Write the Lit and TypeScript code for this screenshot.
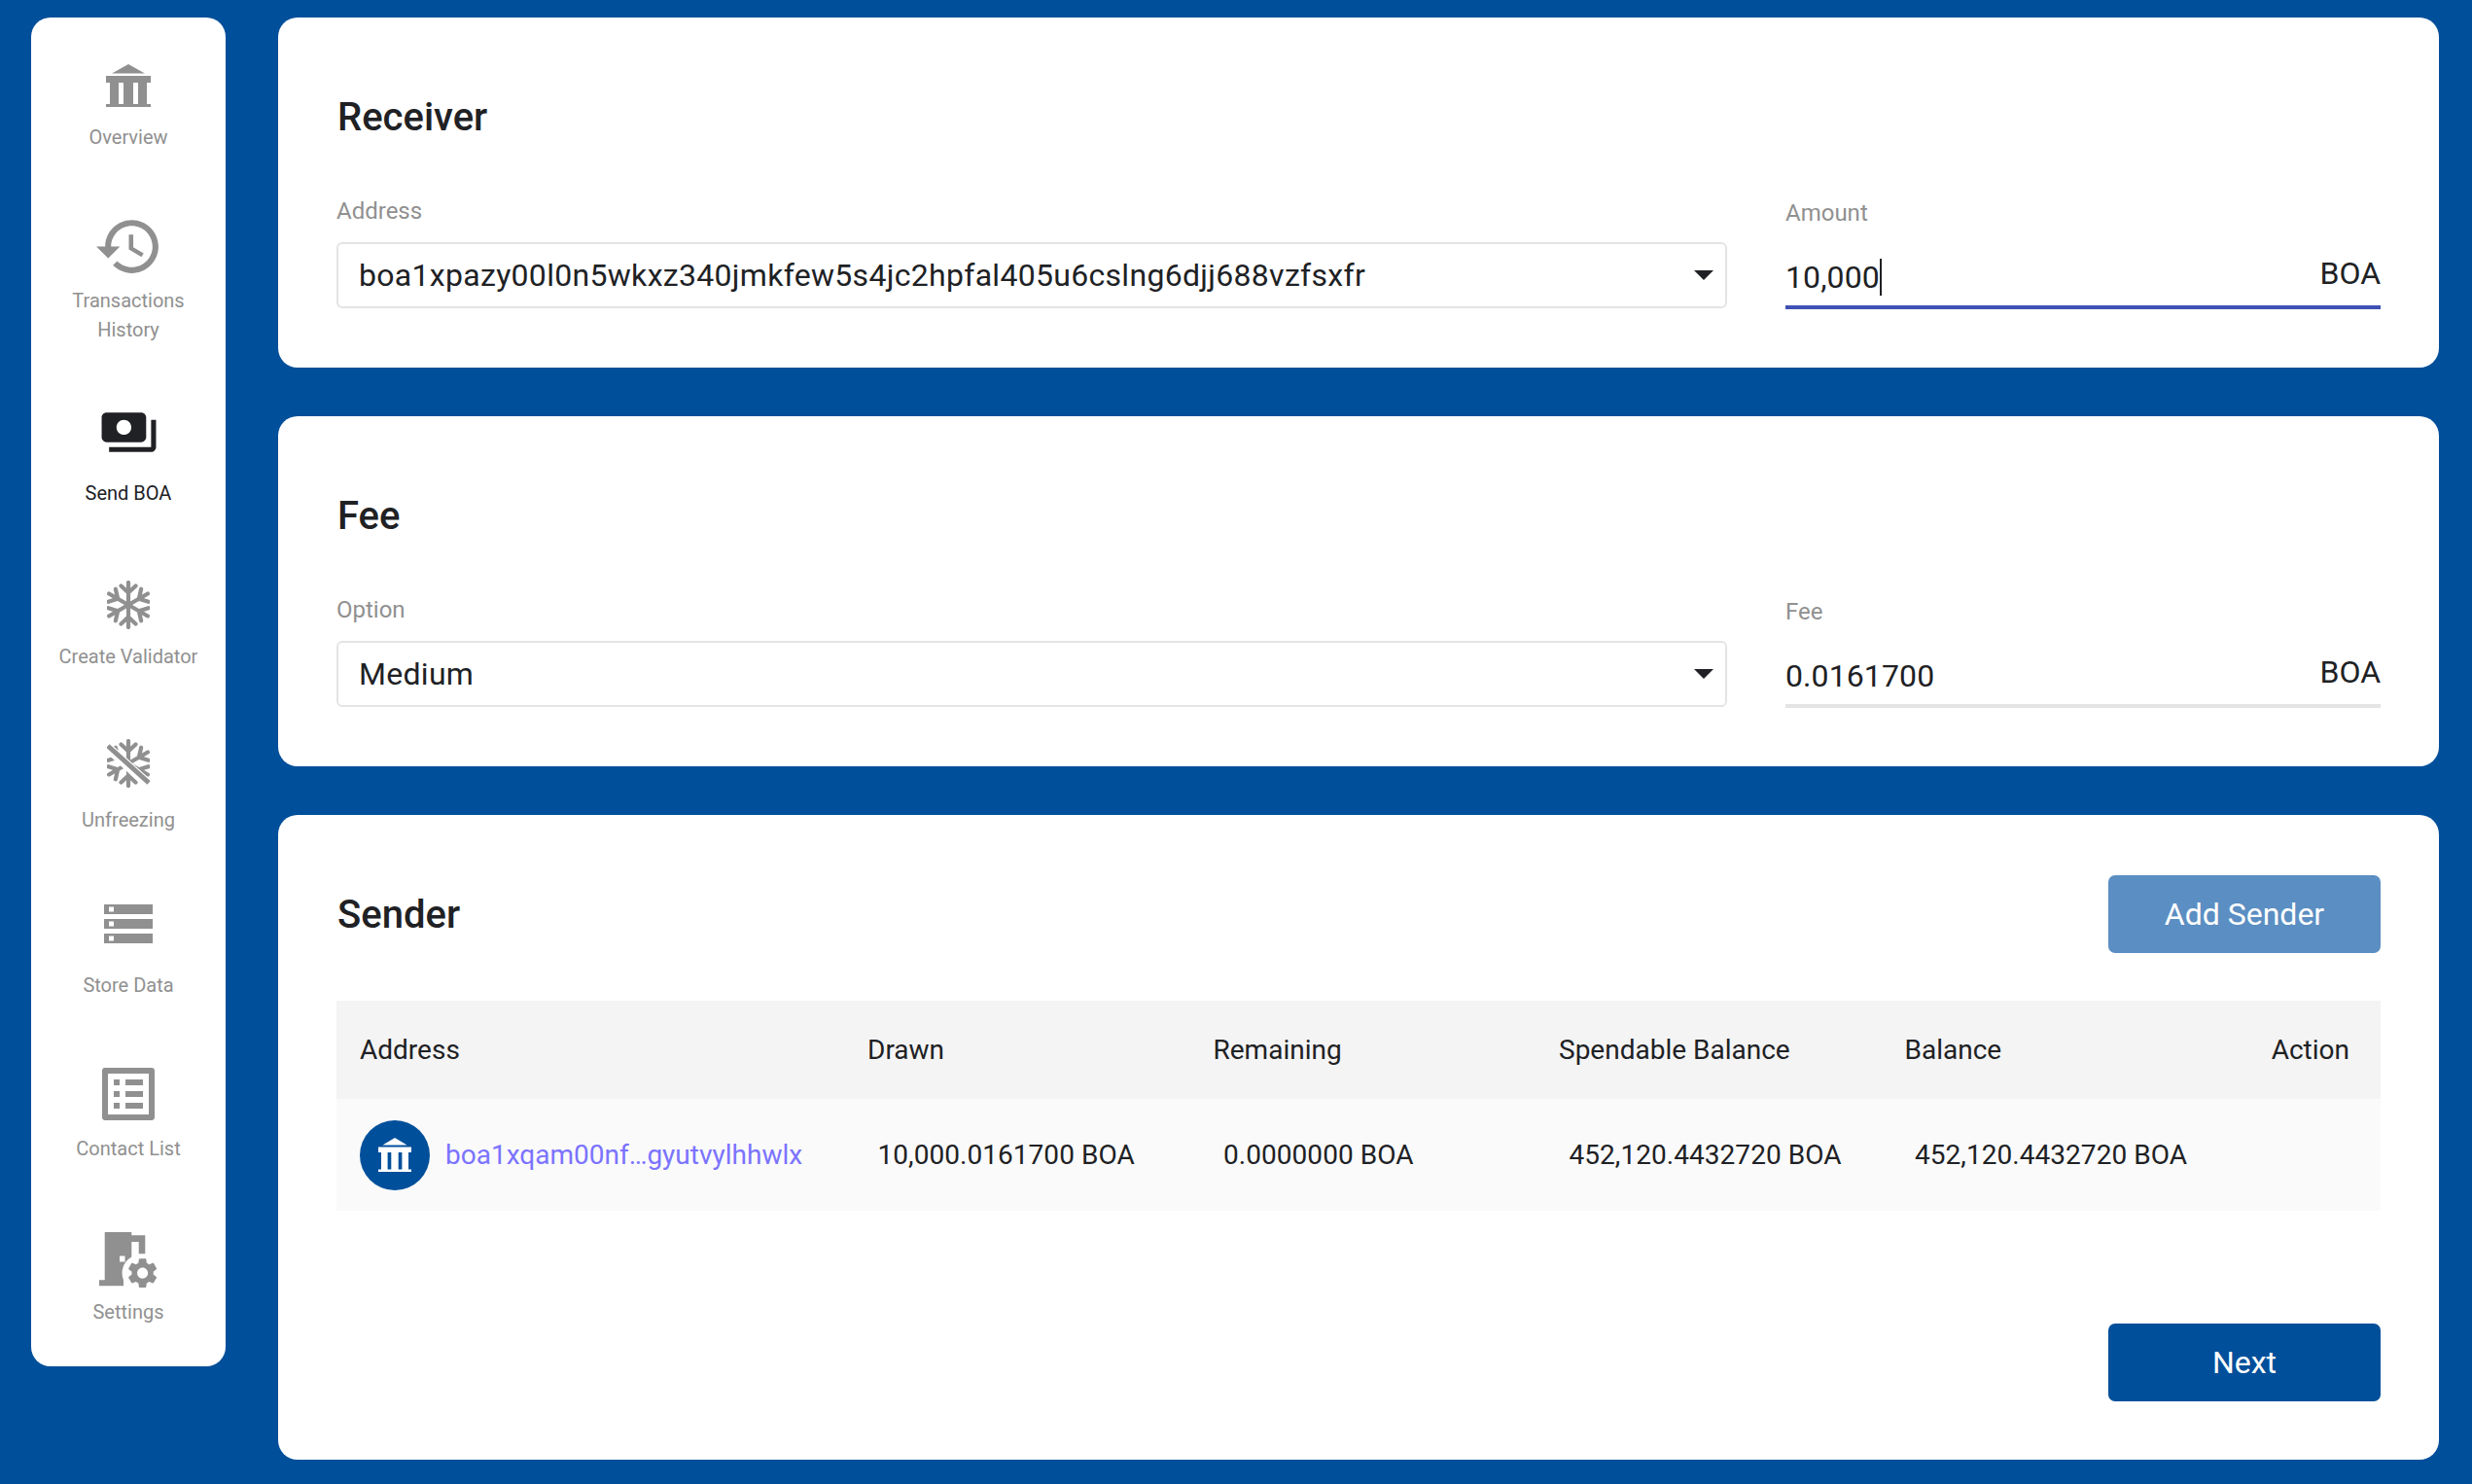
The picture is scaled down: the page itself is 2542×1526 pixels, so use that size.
import { LitElement, html, css, svg } from 'lit';
import { customElement } from 'lit/decorators.js';

const bank = svg`<path fill-rule="evenodd" d="M23 0 40 9.500H6zM0 12h46v7h-4v22h4v3H0v-3h4V19H0zM13 19v22h5V19zM28 19v22h5V19z"/>`;

// six armed snowflake, one arm rotated round the centre
const flake = svg`<g transform="translate(22 25)" fill="none" stroke="#909090" stroke-width="4.200" stroke-linecap="round">
  ${[0, 60, 120, 180, 240, 300].map(a => svg`<path transform="rotate(${a})" d="M0 0V-23M0-12.500-7.500-19.500M0-12.500 7.500-19.500"/>`)}
</g>`;

const gear = 'M19.14 12.94c.04-.3.06-.61.06-.94 0-.32-.02-.64-.07-.94l2.03-1.58c.18-.14.23-.41.12-.61l-1.92-3.32c-.12-.22-.37-.29-.59-.22l-2.39.96c-.5-.38-1.03-.7-1.62-.94l-.36-2.54c-.04-.24-.24-.41-.48-.41h-3.84c-.24 0-.43.17-.47.41l-.36 2.54c-.59.24-1.13.57-1.62.94l-2.39-.96c-.22-.08-.47 0-.59.22L2.74 8.87c-.12.21-.08.47.12.61l2.03 1.58c-.05.3-.09.63-.09.94s.02.64.07.94l-2.03 1.58c-.18.14-.23.41-.12.61l1.92 3.32c.12.22.37.29.59.22l2.39-.96c.5.38 1.03.7 1.62.94l.36 2.54c.05.24.24.41.48.41h3.84c.24 0 .44-.17.47-.41l.36-2.54c.59-.24 1.13-.56 1.62-.94l2.39.96c.22.08.47 0 .59-.22l1.92-3.32c.12-.22.07-.47-.12-.61l-2.01-1.58zM12 15.600c-1.98 0-3.600-1.62-3.600-3.600s1.62-3.600 3.600-3.600 3.600 1.62 3.600 3.600-1.62 3.600-3.600 3.600z';

const navItems = [
  { label: ['Overview'], lift: 6, w: 46, h: 44, box: '0 0 46 44', icon: bank },
  { label: ['Transactions', 'History'], lift: 9, w: 73, h: 73, box: '0 0 24 24', icon: svg`<path d="M13 3c-4.97 0-9 4.03-9 9H1l3.890 3.890.07.14L9 12H6c0-3.870 3.130-7 7-7s7 3.130 7 7-3.130 7-7 7c-1.930 0-3.680-.79-4.940-2.060l-1.420 1.420C8.270 19.990 10.510 21 13 21c4.970 0 9-4.030 9-9s-4.030-9-9-9zm-1 5v5l4.280 2.540.72-1.210-3.500-2.080V8H12z"/>` },
  { label: ['Send BOA'], active: true, lift: 16, w: 61, h: 61, box: '0 0 24 24', icon: svg`<path d="M19 14V6c0-1.100-.9-2-2-2H3c-1.100 0-2 .9-2 2v8c0 1.100.9 2 2 2h14c1.100 0 2-.9 2-2zm-9-1c-1.660 0-3-1.340-3-3s1.340-3 3-3 3 1.340 3 3-1.340 3-3 3zm13-6v11c0 1.100-.9 2-2 2H4v-2h17V7h2z"/>` },
  { label: ['Create Validator'], lift: 6, w: 44, h: 50, box: '0 0 44 50', icon: flake },
  { label: ['Unfreezing'], lift: 11, w: 44, h: 50, box: '0 0 44 50', icon: svg`${flake}<path d="M0 8 42 46" stroke="#fff" stroke-width="10"/><path d="M1 7 43 45" stroke="#909090" stroke-width="5"/>` },
  { label: ['Store Data'], lift: 16, w: 60, h: 60, box: '0 0 24 24', icon: svg`<path d="M2 20h20v-4H2v4zm2-3h2v2H4v-2zM2 4v4h20V4H2zm4 3H4V5h2v2zm-4 7h20v-4H2v4zm2-3h2v2H4v-2z"/>` },
  { label: ['Contact List'], lift: 9, w: 72, h: 72, box: '0 0 24 24', icon: svg`<path d="M19 5v14H5V5h14m1.100-2H3.900c-.5 0-.9.4-.9.9v16.200c0 .4.4.9.9.9h16.200c.4 0 .9-.5.9-.9V3.900c0-.5-.5-.9-.9-.9zM11 7h6v2h-6V7zm0 4h6v2h-6v-2zm0 4h6v2h-6zM7 7h2v2H7zm0 4h2v2H7zm0 4h2v2H7z"/>` },
  { label: ['Settings'], lift: 6, w: 60, h: 58, box: '0 0 60 58', icon: svg`<path fill-rule="evenodd" d="M5.700 0H33.300V3.300H47.300V22.300H40.700V10H33.300V25.500A19 19 0 0 0 25 49.300V55.300H0V49.300H5.700ZM21 24.500h5.500v6H21z"/><path transform="translate(26 23.500) scale(1.550)" d="${gear}"/>` },
];

const senderRow = ['10,000.0161700 BOA', '0.0000000 BOA', '452,120.4432720 BOA', '452,120.4432720 BOA'];

@customElement('app-root')
export class AppRoot extends LitElement {
  static styles = css`
    :host {
      display: block;
      height: 1526px;
      background: #004f9a;
      font-family: Roboto, sans-serif;
      color: #202124;
      overflow: hidden;
    }
    .page {
      display: flex;
      align-items: flex-start;
      gap: 54px;
      padding: 18px 34px 0 32px;
    }
    .sidebar {
      flex: none;
      width: 200px;
      height: 1387px;
      box-sizing: border-box;
      background: #fff;
      border-radius: 20px;
      padding-top: 44px;
    }
    .nav-item {
      display: flex;
      flex-direction: column;
      align-items: center;
      color: #909090;
      font-size: 20px;
      line-height: 30px;
      margin-bottom: 74px;
      text-align: center;
    }
    .nav-item:nth-child(5) { margin-bottom: 76px; }
    .nav-item.active { color: #202124; }
    .nav-icon {
      height: 64px;
      box-sizing: border-box;
      display: flex;
      align-items: center;
      justify-content: center;
    }
    .nav-icon svg { fill: currentColor; display: block; flex: none; }
    main {
      flex: 1;
      display: flex;
      flex-direction: column;
      gap: 50px;
    }
    .card {
      background: #fff;
      border-radius: 20px;
      padding: 0 60px;
      height: 360px;
      box-sizing: border-box;
    }
    .card.sender { height: 663px; }
    h2 {
      margin: 0;
      font-size: 40px;
      font-weight: 500;
      line-height: 46px;
      padding: 80px 0 0 1px;
    }
    .fields {
      display: grid;
      grid-template-columns: 1430px 1fr;
      column-gap: 60px;
      margin-top: 59px;
    }
    .label { font-size: 24px; line-height: 28px; color: #909090; }
    .label.amount { padding-top: 2px; }
    .select {
      margin-top: 18px;
      height: 68px;
      box-sizing: border-box;
      border: 2px solid #e4e4e4;
      border-radius: 6px;
      display: flex;
      align-items: center;
      justify-content: space-between;
      padding: 0 12px 0 21px;
      font-size: 32px;
      letter-spacing: 0.3px;
    }
    .caret {
      width: 0;
      height: 0;
      border-left: 10px solid transparent;
      border-right: 10px solid transparent;
      border-top: 10px solid #202124;
    }
    .input {
      margin-top: 15px;
      height: 70px;
      box-sizing: border-box;
      border-bottom: 4px solid #e4e4e4;
      display: flex;
      justify-content: space-between;
      align-items: center;
      font-size: 32px;
    }
    .input .value { margin-top: 8px; letter-spacing: 0.1px; }
    .input.focused { border-bottom-color: #3f51b5; }
    .caret-line {
      display: inline-block;
      width: 2px;
      height: 38px;
      background: #202124;
      vertical-align: -8px;
    }
    .sender-head {
      display: flex;
      justify-content: space-between;
      align-items: flex-start;
      padding-top: 62px;
    }
    .sender-head h2 { padding-top: 18px; }
    .btn {
      width: 280px;
      height: 80px;
      border-radius: 7px;
      display: flex;
      align-items: center;
      justify-content: center;
      color: #fff;
      font-size: 32px;
      background: #004f9a;
    }
    .btn.light { background: #5b8ec2; }
    .row {
      display: grid;
      grid-template-columns: 522px 355.5px 355.5px 355.5px 355.5px 1fr;
      align-items: center;
      padding-left: 24px;
      font-size: 28px;
    }
    .row.header { height: 101px; background: #f4f4f4; margin-top: 49px; }
    .row.body { height: 115px; background: #fafafa; }
    .row.header .action { text-align: right; padding-right: 32px; }
    .row.body .val { padding-left: 10.5px; letter-spacing: 0.05px; }
    .addr { display: flex; align-items: center; gap: 16px; color: #7b73ff; }
    .avatar {
      width: 72px;
      height: 72px;
      border-radius: 50%;
      background: #004f9a;
      display: flex;
      align-items: center;
      justify-content: center;
    }
    .avatar svg { fill: #fff; display: block; }
    .footer {
      display: flex;
      justify-content: flex-end;
      margin-top: 116px;
    }
  `;

  renderNav() {
    return navItems.map(item => html`
      <div class="nav-item ${item.active ? 'active' : ''}">
        <div class="nav-icon" style="padding-bottom:${item.lift * 2}px">
          <svg width=${item.w} height=${item.h} viewBox=${item.box}>${item.icon}</svg>
        </div>
        <div>${item.label.map(l => html`<div>${l}</div>`)}</div>
      </div>
    `);
  }

  render() {
    return html`
      <div class="page">
        <nav class="sidebar">${this.renderNav()}</nav>
        <main>
          <section class="card">
            <h2>Receiver</h2>
            <div class="fields">
              <div>
                <div class="label">Address</div>
                <div class="select"><span>boa1xpazy00l0n5wkxz340jmkfew5s4jc2hpfal405u6cslng6djj688vzfsxfr</span><span class="caret"></span></div>
              </div>
              <div>
                <div class="label amount">Amount</div>
                <div class="input focused"><span class="value">10,000<span class="caret-line"></span></span><span>BOA</span></div>
              </div>
            </div>
          </section>
          <section class="card">
            <h2>Fee</h2>
            <div class="fields">
              <div>
                <div class="label">Option</div>
                <div class="select"><span>Medium</span><span class="caret"></span></div>
              </div>
              <div>
                <div class="label amount">Fee</div>
                <div class="input"><span class="value">0.0161700</span><span>BOA</span></div>
              </div>
            </div>
          </section>
          <section class="card sender">
            <div class="sender-head">
              <h2>Sender</h2>
              <div class="btn light">Add Sender</div>
            </div>
            <div class="row header">
              <div>Address</div><div>Drawn</div><div>Remaining</div><div>Spendable Balance</div><div>Balance</div><div class="action">Action</div>
            </div>
            <div class="row body">
              <div class="addr">
                <div class="avatar"><svg width="34" height="35" viewBox="0 0 46 44" preserveAspectRatio="none">${bank}</svg></div>
                <span>boa1xqam00nf…gyutvylhhwlx</span>
              </div>
              ${senderRow.map(v => html`<div class="val">${v}</div>`)}
              <div></div>
            </div>
            <div class="footer"><div class="btn">Next</div></div>
          </section>
        </main>
      </div>
    `;
  }
}
